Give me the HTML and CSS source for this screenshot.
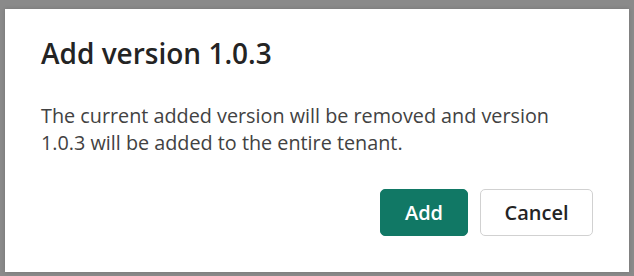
FILE: index.html
```html
<!DOCTYPE html>
<html>
<head>
<meta charset="utf-8">
<link rel="stylesheet" href="styles.css">
</head>
<body>
<div class="backdrop">
  <div class="dialog">
    <h2 class="title">Add version 1.0.3</h2>
    <p class="content">The current added version will be removed and version 1.0.3 will be added to the entire tenant.</p>
    <div class="actions">
      <button class="btn primary">Add</button>
      <button class="btn secondary">Cancel</button>
    </div>
  </div>
</div>
</body>
</html>
```

FILE: styles.css
```css
html, body {
  margin: 0;
  padding: 0;
  width: 634px;
  height: 276px;
  overflow: hidden;
  background: #8a8a8a;
}
.backdrop {
  padding: 9px 5px 4px 5px;
  height: 276px;
  box-sizing: border-box;
}
.dialog {
  background: #ffffff;
  height: 263px;
  box-sizing: border-box;
  padding: 26px 36px 36px 36px;
  font-family: "Open Sans", "Noto Sans", sans-serif;
  display: flex;
  flex-direction: column;
  box-shadow: 0 0 4px rgba(0,0,0,0.15);
}
.title {
  margin: 0;
  font-size: 28px;
  line-height: 36px;
  font-weight: 600;
  color: #242424;
}
.content {
  margin: 31px 0 0 0;
  font-size: 19.8px;
  line-height: 27px;
  color: #424242;
}
.actions {
  margin-top: auto;
  display: flex;
  justify-content: flex-end;
  gap: 12px;
}
.btn {
  font-family: inherit;
  font-size: 20px;
  font-weight: 600;
  height: 47px;
  border-radius: 5px;
  padding: 0;
  box-sizing: border-box;
  cursor: pointer;
}
.primary {
  width: 88px;
  background: #117865;
  color: #ffffff;
  border: 1px solid #117865;
}
.secondary {
  width: 113px;
  background: #ffffff;
  color: #242424;
  border: 1px solid #d1d1d1;
}
```
